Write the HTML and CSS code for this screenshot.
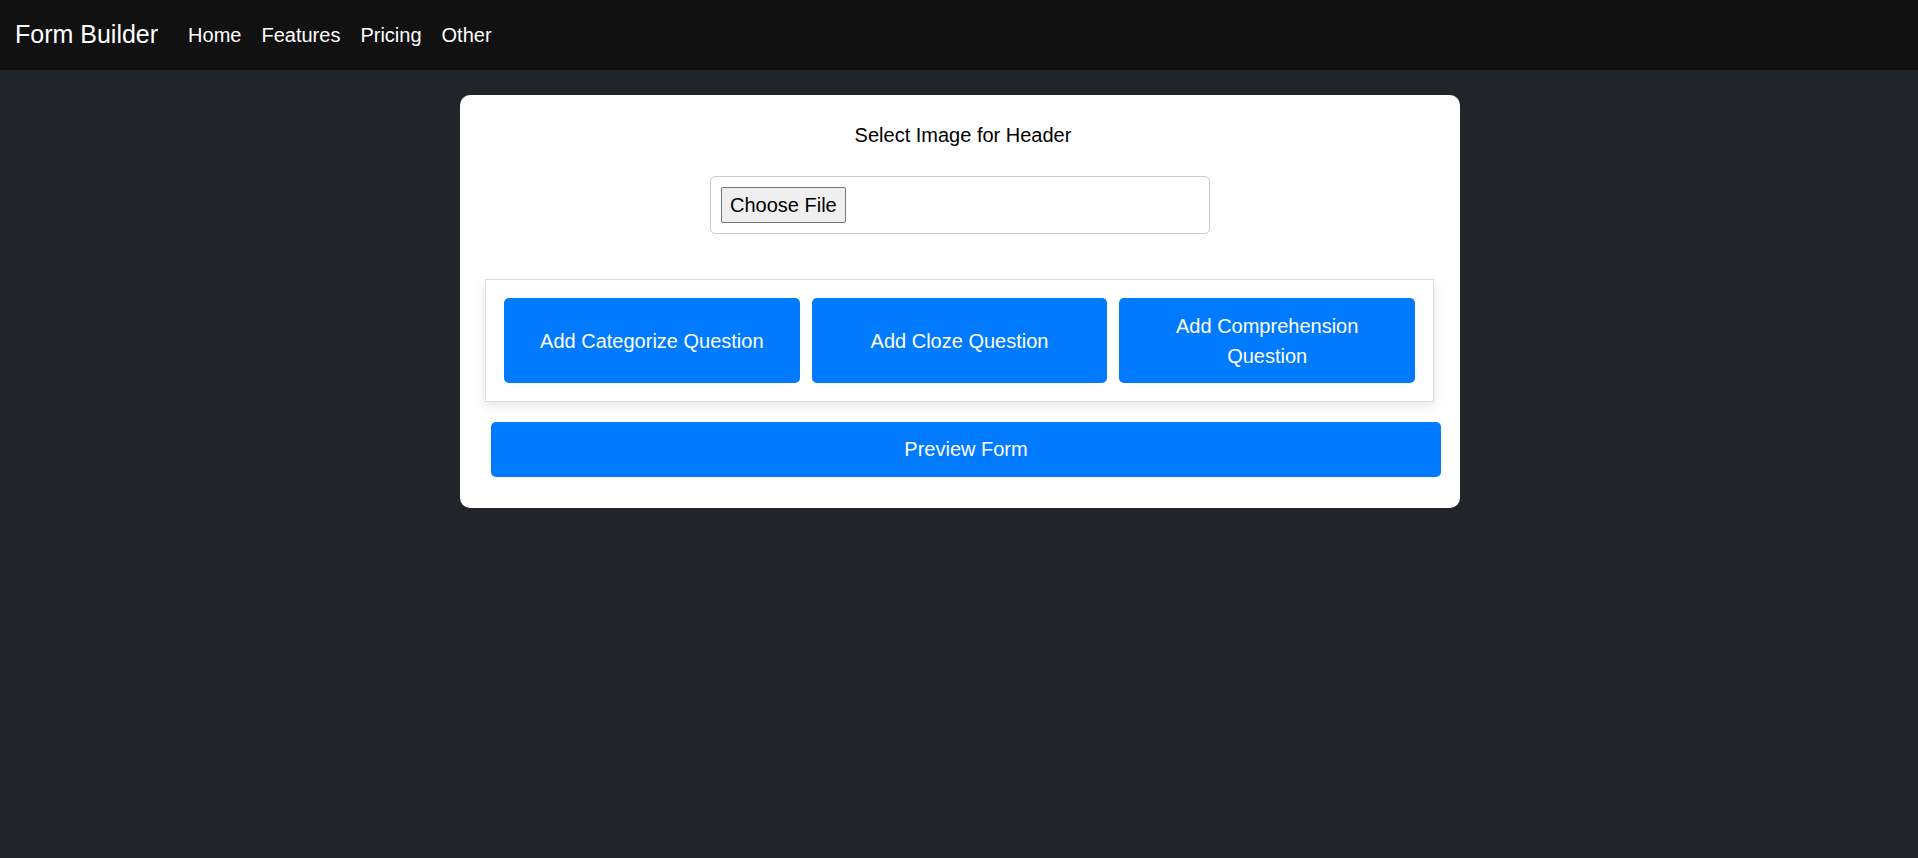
FILE: index.html
```html
<!DOCTYPE html>
<html lang="en">
<head>
<meta charset="utf-8">
<title>Form Builder</title>
<link rel="stylesheet" href="styles.css">
</head>
<body>
<nav class="navbar">
  <a class="brand" href="#">Form Builder</a>
  <ul class="nav-links">
    <li><a class="nav-link" href="#">Home</a></li>
    <li><a class="nav-link" href="#">Features</a></li>
    <li><a class="nav-link" href="#">Pricing</a></li>
    <li><a class="nav-link" href="#">Other</a></li>
  </ul>
</nav>
<main class="page">
  <section class="card">
    <p class="label">Select Image for Header</p>
    <label class="file-field">
      <span class="file-btn">Choose File</span>
      <input class="file-input" type="file" accept="image/*">
    </label>
    <div class="question-box">
      <button class="btn q-btn" type="button">Add Categorize Question</button>
      <button class="btn q-btn" type="button">Add Cloze Question</button>
      <button class="btn q-btn" type="button">Add Comprehension Question</button>
    </div>
    <button class="btn preview-btn" type="button">Preview Form</button>
  </section>
</main>
</body>
</html>
```

FILE: styles.css
```css
* {
  box-sizing: border-box;
}

html, body {
  margin: 0;
  padding: 0;
}

body {
  background: #212529;
  font-family: "Liberation Sans", Arial, sans-serif;
  font-size: 20px;
  line-height: 1.5;
  color: #000;
  min-height: 858px;
}

.navbar {
  height: 70px;
  background: #111111;
  display: flex;
  align-items: center;
  padding: 0 15px;
}

.brand {
  color: #fff;
  text-decoration: none;
  font-size: 25px;
  line-height: 1.5;
  margin-right: 20px;
}

.nav-links {
  list-style: none;
  margin: 0;
  padding: 0;
  display: flex;
}

.nav-link {
  display: block;
  color: #fff;
  text-decoration: none;
  font-size: 20px;
  padding: 10px 10px;
}

.page {
  display: flex;
  justify-content: center;
  padding: 25px 0 0 2px;
}

.card {
  width: 1000px;
  background: #fff;
  border-radius: 10px;
  padding: 25px 19px 31px 25px;
  display: flex;
  flex-direction: column;
  align-items: flex-start;
}

.label {
  margin: 0;
  width: 100%;
  text-align: center;
  line-height: 30px;
}

.file-field {
  align-self: center;
  margin: 26px 0 0 -6px;
  width: 500px;
  height: 58px;
  border: 1px solid #cccccc;
  border-radius: 5px;
  padding: 10px;
  display: flex;
  align-items: center;
  cursor: pointer;
}

.file-btn {
  display: inline-block;
  height: 36px;
  padding: 0 8px;
  line-height: 34px;
  font-size: 20px;
  color: #000;
  background: #efefef;
  border: 1px solid #767676;
  border-radius: 2px;
}

.file-input {
  display: none;
}

.question-box {
  margin-top: 45px;
  width: 949px;
  border: 1px solid #dddddd;
  padding: 18px;
  display: flex;
  gap: 12px;
  box-shadow: 0 4px 10px rgba(0, 0, 0, 0.1);
}

.btn {
  font-family: "Liberation Sans", Arial, sans-serif;
  font-size: 20px;
  line-height: 30px;
  color: #fff;
  background: #007bff;
  border: 0;
  border-radius: 5px;
  cursor: pointer;
}

.q-btn {
  flex: 1 1 0;
  min-height: 85px;
  padding: 12.5px 20px;
}

.preview-btn {
  margin-top: 20px;
  margin-left: 6px;
  width: 950px;
  height: 55px;
  padding: 0 20px 2px;
}
```
